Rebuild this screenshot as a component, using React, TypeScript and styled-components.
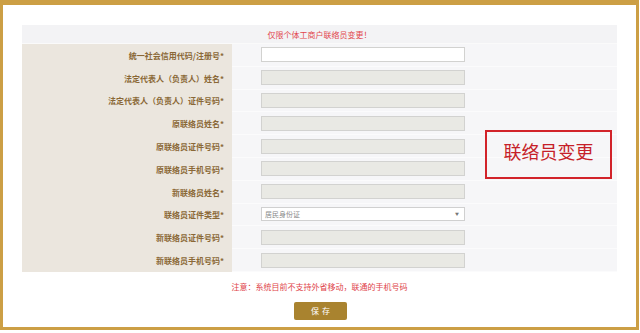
import React from "react";
import styled, { createGlobalStyle } from "styled-components";

const Global = createGlobalStyle`
  html, body { margin: 0; padding: 0; background: #fff; }
  body { font-family: "Noto Sans CJK SC", "Noto Sans", sans-serif; }
  * { box-sizing: border-box; }
`;

const Page = styled.div`
  width: 640px;
  height: 333px;
  padding-bottom: 3px;
  background: #fff;
`;

const Frame = styled.div`
  position: relative;
  width: 639px;
  height: 330px;
  border-style: solid;
  border-color: #cc9f45;
  border-width: 5px 3px 3px 3px;
  background: #fff;
  padding: 20px 0 0 19px;
  display: flex;
  flex-direction: column;
  align-items: flex-start;
`;

const Table = styled.div`
  position: relative;
  width: 595px;
  display: flex;
  flex-direction: column;
`;

const HeaderRow = styled.div`
  height: 19px;
  background: #f3f3f5;
  display: flex;
  align-items: center;
  justify-content: center;
  font-size: 8px;
  color: #e2474c;
  border-bottom: 1px solid #fafafa;
`;

const Row = styled.div`
  height: 22.8px;
  display: grid;
  grid-template-columns: 210px 1fr;
`;

const LabelCell = styled.div`
  background: #ebe6de;
  display: flex;
  align-items: center;
  justify-content: flex-end;
  padding-right: 8px;
  font-size: 8px;
  color: #8a6836;
  font-weight: 700;
`;

const FieldCell = styled.div`
  background: #f6f6f8;
  border-bottom: 1px solid #fbfbfc;
  display: flex;
  align-items: center;
  padding-left: 29px;
`;

const Input = styled.div<{ $enabled?: boolean }>`
  width: 204px;
  height: 15px;
  border: 1.5px solid #d2d2d0;
  background: ${(p) => (p.$enabled ? "#ffffff" : "#e9e9e4")};
`;

const Select = styled.div`
  width: 204px;
  height: 14px;
  border: 1px solid #d0d0d0;
  background: #fff;
  display: flex;
  align-items: center;
  justify-content: space-between;
  padding: 0 5px 0 3px;
  font-size: 7px;
  color: #8a8a8a;
`;

const Arrow = styled.span`
  font-size: 4px;
  color: #777;
`;

const Callout = styled.div`
  position: absolute;
  left: 463px;
  top: 105px;
  width: 127px;
  height: 49px;
  border: 2px solid #d2232a;
  display: flex;
  justify-content: center;
  padding-top: 8px;
  font-size: 18px;
  line-height: 22px;
  color: #c61f29;
  font-family: "Noto Sans CJK SC", sans-serif;
`;

const Note = styled.div`
  width: 595px;
  margin-top: 9px;
  text-align: center;
  font-size: 8px;
  line-height: 11px;
  color: #e0444a;
`;

const ButtonWrap = styled.div`
  width: 595px;
  display: flex;
  justify-content: center;
  padding-left: 2px;
  margin-top: 10px;
`;

const SaveButton = styled.button`
  width: 53px;
  height: 18px;
  border: none;
  border-radius: 2px;
  background: #a9832f;
  color: #fff;
  font-size: 8px;
  font-family: "Noto Sans CJK SC", sans-serif;
  letter-spacing: 3px;
  padding: 0 0 0 3px;
`;

type Field = { label: string; kind: "text" | "disabled" | "select" };

const fields: Field[] = [
  { label: "统一社会信用代码/注册号*", kind: "text" },
  { label: "法定代表人（负责人）姓名*", kind: "disabled" },
  { label: "法定代表人（负责人）证件号码*", kind: "disabled" },
  { label: "原联络员姓名*", kind: "disabled" },
  { label: "原联络员证件号码*", kind: "disabled" },
  { label: "原联络员手机号码*", kind: "disabled" },
  { label: "新联络员姓名*", kind: "disabled" },
  { label: "联络员证件类型*", kind: "select" },
  { label: "新联络员证件号码*", kind: "disabled" },
  { label: "新联络员手机号码*", kind: "disabled" },
];

export default function App() {
  return (
    <>
      <Global />
      <Page>
        <Frame>
          <Table>
            <HeaderRow>仅限个体工商户联络员变更！</HeaderRow>
            {fields.map((f) => (
              <Row key={f.label}>
                <LabelCell>{f.label}</LabelCell>
                <FieldCell>
                  {f.kind === "select" ? (
                    <Select>
                      <span>居民身份证</span>
                      <Arrow>▼</Arrow>
                    </Select>
                  ) : (
                    <Input $enabled={f.kind === "text"} />
                  )}
                </FieldCell>
              </Row>
            ))}
            <Callout>联络员变更</Callout>
          </Table>
          <Note>注意：系统目前不支持外省移动，联通的手机号码</Note>
          <ButtonWrap>
            <SaveButton>保存</SaveButton>
          </ButtonWrap>
        </Frame>
      </Page>
    </>
  );
}
